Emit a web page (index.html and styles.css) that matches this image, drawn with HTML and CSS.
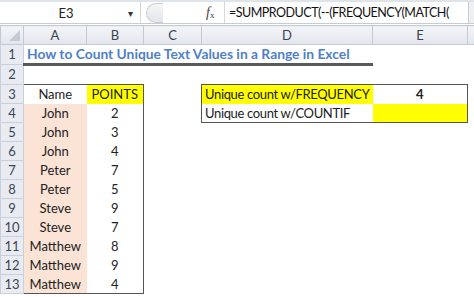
FILE: index.html
```html
<!DOCTYPE html>
<html lang="en">
<head>
    <meta charset="UTF-8">
    <title>How to Count Unique Text Values in a Range in Excel</title>
    <link rel="stylesheet" href="styles.css">
</head>
<body>
    <div class="topstrip"></div>
    <div class="formula-bar">
        <div class="namebox">
            <span class="cellref">E3</span>
            <span class="arrow">&#9662;</span>
        </div>
        <div class="divider"><span class="pill"></span></div>
        <div class="fx"><i>f</i><small>x</small></div>
        <div class="formula">=SUMPRODUCT(--(FREQUENCY(MATCH(</div>
        <div class="expand"></div>
    </div>
    <table class="sheet">
        <colgroup>
            <col class="c-hdr">
            <col class="c-a">
            <col class="c-b">
            <col class="c-c">
            <col class="c-d">
            <col class="c-e">
            <col class="c-rest">
        </colgroup>
        <tr class="colhead">
            <th class="corner"><span class="tri"></span></th>
            <th>A</th><th>B</th><th>C</th><th>D</th><th>E</th><th></th>
        </tr>
        <tr class="r-title">
            <th>1</th>
            <td class="title" colspan="4">How to Count Unique Text Values in a Range in Excel</td>
            <td></td><td></td>
        </tr>
        <tr class="r-tall">
            <th>2</th><td></td><td></td><td></td><td></td><td></td><td></td>
        </tr>
        <tr>
            <th>3</th>
            <td class="name top left">Name</td>
            <td class="pts top right yellow">POINTS</td>
            <td></td>
            <td class="label top left yellow">Unique count w/FREQUENCY</td>
            <td class="result top right">4</td>
            <td></td>
        </tr>
        <tr>
            <th>4</th>
            <td class="name left peach">John</td><td class="pts right">2</td><td></td>
            <td class="label bottom left">Unique count w/COUNTIF</td>
            <td class="result bottom right yellow"></td>
            <td></td>
        </tr>
        <tr><th>5</th><td class="name left peach">John</td><td class="pts right">3</td><td></td><td></td><td></td><td></td></tr>
        <tr><th>6</th><td class="name left peach">John</td><td class="pts right">4</td><td></td><td></td><td></td><td></td></tr>
        <tr><th>7</th><td class="name left peach">Peter</td><td class="pts right">7</td><td></td><td></td><td></td><td></td></tr>
        <tr><th>8</th><td class="name left peach">Peter</td><td class="pts right">5</td><td></td><td></td><td></td><td></td></tr>
        <tr><th>9</th><td class="name left peach">Steve</td><td class="pts right">9</td><td></td><td></td><td></td><td></td></tr>
        <tr><th>10</th><td class="name left peach">Steve</td><td class="pts right">7</td><td></td><td></td><td></td><td></td></tr>
        <tr><th>11</th><td class="name left peach">Matthew</td><td class="pts right">8</td><td></td><td></td><td></td><td></td></tr>
        <tr><th>12</th><td class="name left peach">Matthew</td><td class="pts right">9</td><td></td><td></td><td></td><td></td></tr>
        <tr><th>13</th><td class="name left bottom peach">Matthew</td><td class="pts right bottom">4</td><td></td><td></td><td></td><td></td></tr>
    </table>
</body>
</html>
```

FILE: styles.css
```css
body {
    margin: 0;
    width: 474px;
    height: 297px;
    overflow: hidden;
    background: #fff;
    font-family: Lato, "Liberation Sans", sans-serif;
    color: #222;
}
.topstrip {
    height: 2px;
    background: #dfe4ea;
}
.formula-bar {
    display: flex;
    height: 21px;
    border-bottom: 1px solid #c6ccd4;
    font-size: 13px;
    align-items: stretch;
}
.namebox {
    width: 140px;
    display: flex;
    align-items: center;
    border-right: 1px solid #d4d8de;
}
.cellref {
    flex: 1;
    text-align: center;
    padding-left: 4px;
}
.arrow {
    width: 12px;
    font-size: 10px;
    color: #333;
}
.divider {
    width: 60px;
    display: flex;
    align-items: center;
    padding-left: 5px;
}
.pill {
    width: 16px;
    height: 18px;
    border: 1px solid #c8ccd2;
    border-right: none;
    border-radius: 10px 0 0 10px;
    background: linear-gradient(#f4f5f7, #e3e6ea);
}
.fx {
    width: 16px;
    display: flex;
    align-items: center;
    font-family: "Liberation Serif", serif;
    font-size: 14px;
    color: #444;
    border-right: 1px solid #d4d8de;
    padding-right: 2px;
}
.fx small {
    font-size: 9px;
    margin-top: 4px;
}
.formula {
    flex: 1;
    display: flex;
    align-items: center;
    padding-left: 4px;
    font-size: 12.5px;
    letter-spacing: -0.5px;
    color: #111;
    white-space: nowrap;
    overflow: hidden;
}
.expand {
    width: 5px;
    border-left: 1px solid #c6ccd4;
    background: #eef0f3;
}
.sheet {
    margin-top: 1px;
    border-collapse: collapse;
    table-layout: fixed;
    width: 474px;
    font-size: 13px;
}
.c-hdr { width: 23px; }
.c-a { width: 63px; }
.c-b { width: 57px; }
.c-c { width: 58px; }
.c-d { width: 171px; }
.c-e { width: 95px; }
.c-rest { width: 7px; }
.sheet tr {
    height: 19px;
}
.sheet .r-title, .sheet .r-tall {
    height: 20px;
}
.sheet td {
    padding: 0 3px;
    white-space: nowrap;
    line-height: 18px;
}
.sheet th {
    font-weight: normal;
    font-size: 13px;
    color: #3c4452;
    background: #e8ecf2;
    border: 1px solid #c9d0da;
    padding: 0;
    line-height: 17px;
}
.colhead th {
    background: linear-gradient(#f3f5f8, #e2e6ec);
    border-color: #c3cad4;
}
.corner {
    position: relative;
}
.tri {
    position: absolute;
    right: 3px;
    bottom: 3px;
    border-left: 11px solid transparent;
    border-bottom: 11px solid #c4cad3;
}
.title {
    font-weight: bold;
    color: #4f7fcc;
    border-bottom: 3px solid #5a5a5a;
    padding-left: 3px;
    font-size: 13.8px;
}
.name, .pts, .result {
    text-align: center;
}
.result {
    font-weight: bold;
}
.label {
    padding-left: 3px;
    letter-spacing: -0.35px;
}
.peach { background: #fbe3d6; }
.yellow { background: #ffff00; }
.top { border-top: 1px solid #555; }
.bottom { border-bottom: 1px solid #555; }
.left { border-left: 1px solid #555; }
.right { border-right: 1px solid #555; }
```
